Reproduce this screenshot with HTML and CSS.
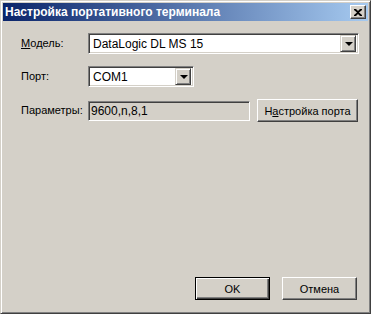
FILE: index.html
```html
<!DOCTYPE html>
<html lang="ru">
<head>
  <meta charset="UTF-8">
  <title>Настройка портативного терминала</title>
  <link rel="stylesheet" href="styles.css">
</head>
<body>
  <div class="window">
    <div class="titlebar">
      <span class="title">Настройка портативного терминала</span>
      <span class="close">
        <svg width="8" height="7" viewBox="0 0 8 7">
          <path d="M0 0h2l2 2 2-2h2v1L5 3.5 8 6v1H6L4 5 2 7H0V6l3-2.5L0 1z" fill="#000"/>
        </svg>
      </span>
    </div>

    <div class="content">
      <div class="form">
        <label class="label"><u>М</u>одель:</label>
        <div class="combo wide">
          <span class="value">DataLogic DL MS 15</span>
          <span class="arrow"><i></i></span>
        </div>

        <label class="label">Порт:</label>
        <div class="combo narrow">
          <span class="value">COM1</span>
          <span class="arrow"><i></i></span>
        </div>

        <label class="label">Параметры:</label>
        <div class="params">
          <div class="field">9600,n,8,1</div>
          <button class="btn port">Н<u>а</u>стройка порта</button>
        </div>
      </div>

      <div class="footer">
        <button class="btn default">OK</button>
        <button class="btn">Отмена</button>
      </div>
    </div>
  </div>
</body>
</html>
```

FILE: styles.css
```css
body {
  margin: 0;
  padding: 0;
  background-color: #D4D0C8;
  font-family: 'Liberation Sans', Arial, sans-serif;
  font-size: 11px;
  color: #000;
}

.window {
  width: 371px;
  height: 314px;
  box-sizing: border-box;
  background-color: #D4D0C8;
  border: 1px solid;
  border-color: #D4D0C8 #404040 #404040 #D4D0C8;
  box-shadow: inset 1px 1px #fff, inset -1px -1px #808080;
  padding: 2px;
  display: flex;
  flex-direction: column;
}

.titlebar {
  height: 18px;
  background: linear-gradient(to right, #0A246A, #A6CAF0);
  display: flex;
  align-items: center;
  justify-content: space-between;
  padding: 0 2px 0 2px;
}

.title {
  color: #fff;
  font-weight: bold;
  font-size: 12px;
}

.close {
  width: 16px;
  height: 14px;
  box-sizing: border-box;
  background-color: #D4D0C8;
  border: 1px solid;
  border-color: #fff #404040 #404040 #fff;
  box-shadow: inset -1px -1px #808080;
  display: flex;
  align-items: center;
  justify-content: center;
}

.content {
  flex: 1;
  display: flex;
  flex-direction: column;
  padding: 12px 11px 11px 18px;
}

.form {
  display: grid;
  grid-template-columns: 67px 1fr;
  row-gap: 12px;
  align-items: center;
}

.label {
  line-height: 13px;
}

.combo {
  height: 21px;
  box-sizing: border-box;
  background-color: #fff;
  border: 1px solid;
  border-color: #808080 #fff #fff #808080;
  box-shadow: inset 1px 1px #404040, inset -1px -1px #D4D0C8;
  display: flex;
  align-items: center;
  padding: 2px;
}

.combo.wide {
  width: 271px;
}

.combo.narrow {
  width: 106px;
}

.value {
  flex: 1;
  padding-left: 2px;
  font-size: 12px;
}

.arrow {
  width: 16px;
  height: 17px;
  box-sizing: border-box;
  background-color: #D4D0C8;
  border: 1px solid;
  border-color: #D4D0C8 #404040 #404040 #D4D0C8;
  box-shadow: inset 1px 1px #fff, inset -1px -1px #808080;
  display: flex;
  align-items: center;
  justify-content: center;
}

.arrow i {
  width: 0;
  height: 0;
  border-left: 4px solid transparent;
  border-right: 4px solid transparent;
  border-top: 4px solid #000;
  margin-left: 1px;
}

.params {
  display: flex;
  align-items: center;
  gap: 7px;
}

.field {
  width: 162px;
  height: 20px;
  box-sizing: border-box;
  border: 1px solid;
  border-color: #808080 #fff #fff #808080;
  box-shadow: inset 1px 1px #404040, inset -1px -1px #D4D0C8;
  padding: 3px 2px;
  line-height: 13px;
  font-size: 12px;
  color: #000;
}

.btn {
  font-family: 'Liberation Sans', Arial, sans-serif;
  font-size: 11px;
  color: #000;
  background-color: #D4D0C8;
  border: 1px solid;
  border-color: #fff #404040 #404040 #fff;
  box-shadow: inset -1px -1px #808080;
  width: 75px;
  height: 23px;
  padding: 0;
  margin: 0;
}

.btn.port {
  width: 101px;
}

.btn.default {
  border: 1px solid #000;
  box-shadow: inset 1px 1px #fff, inset -1px -1px #404040, inset -2px -2px #808080;
}

.footer {
  margin-top: auto;
  display: flex;
  justify-content: flex-end;
  gap: 12px;
}
```
